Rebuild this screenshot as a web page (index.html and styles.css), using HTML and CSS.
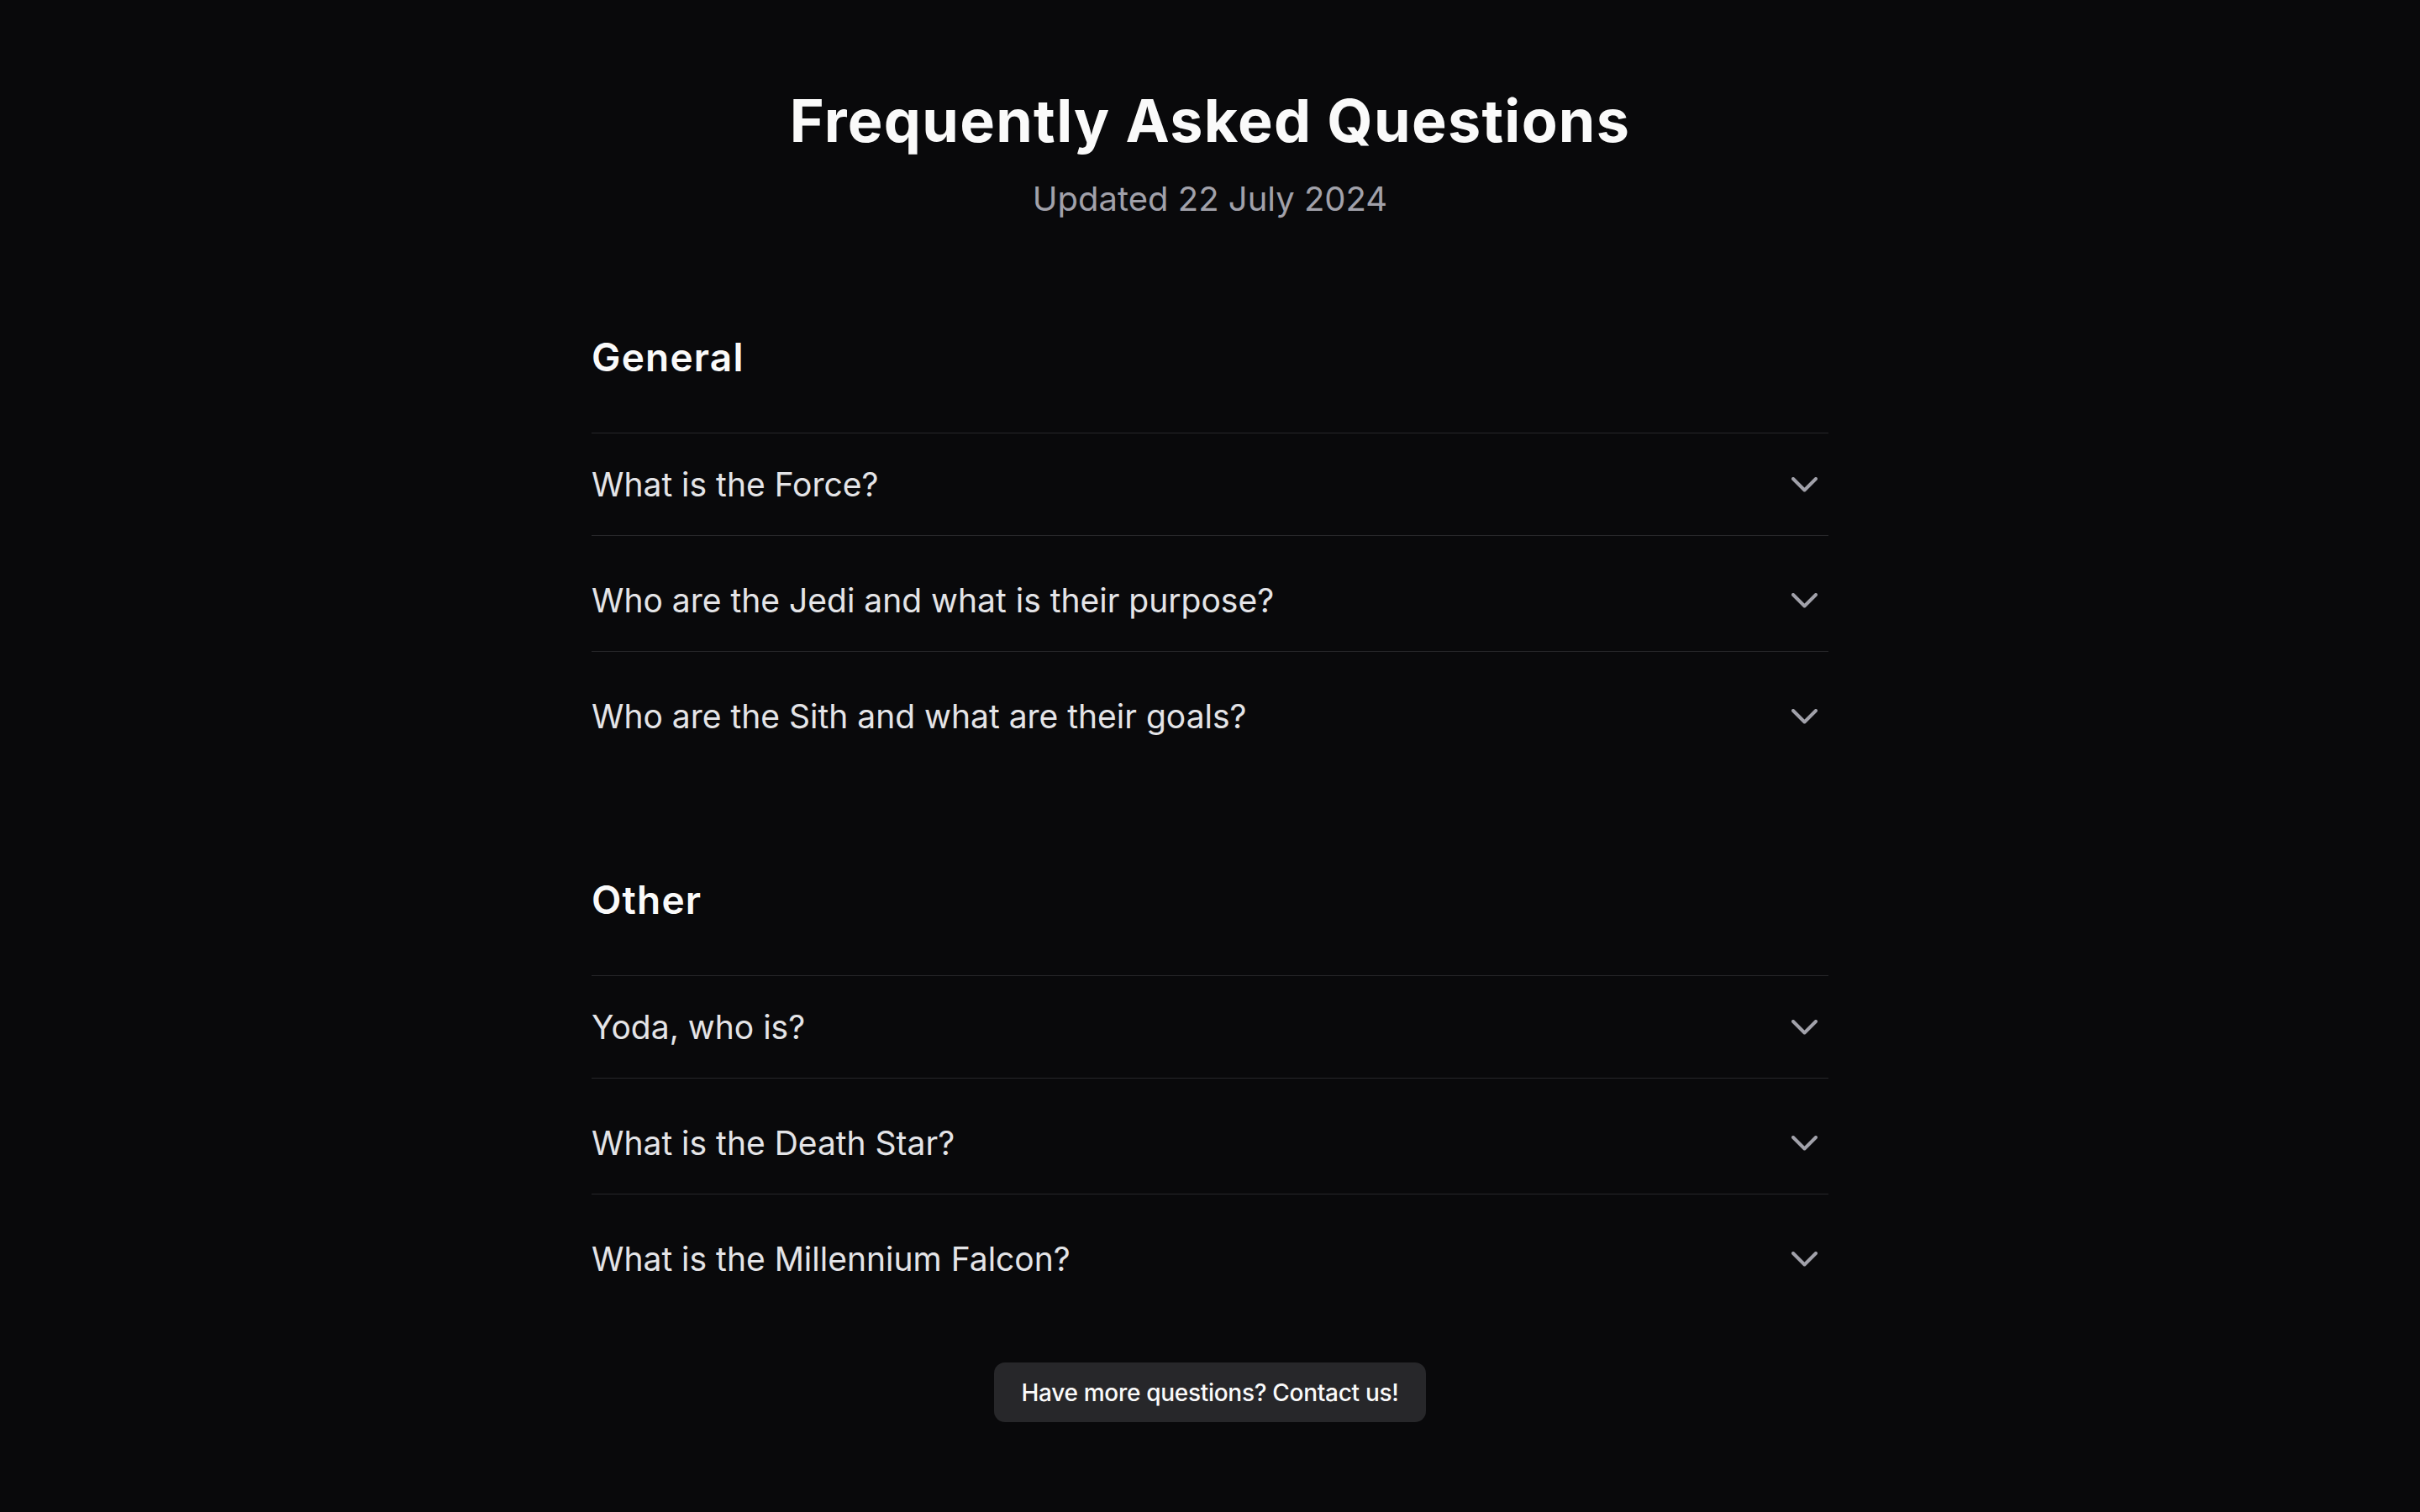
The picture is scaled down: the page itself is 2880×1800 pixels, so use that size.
FILE: index.html
```html
<!DOCTYPE html>
<html lang="en">
<head>
<meta charset="utf-8">
<title>Frequently Asked Questions</title>
<link rel="stylesheet" href="styles.css">
</head>
<body>
<main class="page">
  <header class="page-header">
    <h1 class="title">Frequently Asked Questions</h1>
    <p class="subtitle">Updated 22 July 2024</p>
  </header>

  <section class="faq-section">
    <h2 class="section-title">General</h2>
    <div class="faq-list">
      <div class="faq-item">
        <button class="faq-trigger"><span>What is the Force?</span>
          <svg class="chev" width="31" height="18" viewBox="0 0 31 18"><polyline points="2,2 15.5,15.5 29,2"/></svg>
        </button>
      </div>
      <div class="faq-item">
        <button class="faq-trigger"><span>Who are the Jedi and what is their purpose?</span>
          <svg class="chev" width="31" height="18" viewBox="0 0 31 18"><polyline points="2,2 15.5,15.5 29,2"/></svg>
        </button>
      </div>
      <div class="faq-item">
        <button class="faq-trigger"><span>Who are the Sith and what are their goals?</span>
          <svg class="chev" width="31" height="18" viewBox="0 0 31 18"><polyline points="2,2 15.5,15.5 29,2"/></svg>
        </button>
      </div>
    </div>
  </section>

  <section class="faq-section">
    <h2 class="section-title">Other</h2>
    <div class="faq-list">
      <div class="faq-item">
        <button class="faq-trigger"><span>Yoda, who is?</span>
          <svg class="chev" width="31" height="18" viewBox="0 0 31 18"><polyline points="2,2 15.5,15.5 29,2"/></svg>
        </button>
      </div>
      <div class="faq-item">
        <button class="faq-trigger"><span>What is the Death Star?</span>
          <svg class="chev" width="31" height="18" viewBox="0 0 31 18"><polyline points="2,2 15.5,15.5 29,2"/></svg>
        </button>
      </div>
      <div class="faq-item">
        <button class="faq-trigger"><span>What is the Millennium Falcon?</span>
          <svg class="chev" width="31" height="18" viewBox="0 0 31 18"><polyline points="2,2 15.5,15.5 29,2"/></svg>
        </button>
      </div>
    </div>
  </section>

  <div class="cta">
    <a class="cta-button" href="#">Have more questions? Contact us!</a>
  </div>
</main>
</body>
</html>
```

FILE: styles.css
```css
* { box-sizing: border-box; }

html, body {
  margin: 0;
  padding: 0;
  background: #09090b;
  color: #fafafa;
  font-family: Inter, "Noto Sans", "Liberation Sans", sans-serif;
}

body {
  min-height: 1800px;
}

.page {
  width: 1472px;
  margin: 0 auto;
  padding-top: 102px;
  display: flex;
  flex-direction: column;
}

.page-header {
  text-align: center;
  margin-bottom: 136px;
}

.title {
  margin: 0;
  font-size: 70px;
  line-height: 84px;
  font-weight: 700;
  color: #fafafa;
  letter-spacing: 1.3px;
}

.subtitle {
  margin: 27px 0 0;
  font-size: 40px;
  line-height: 48px;
  font-weight: 400;
  color: #a1a1aa;
}

.faq-section + .faq-section {
  margin-top: 130px;
}

.section-title {
  margin: 0 0 62px;
  font-size: 46px;
  line-height: 56px;
  font-weight: 600;
  color: #fafafa;
  letter-spacing: 1.2px;
}

.faq-item {
  border-top: 1px solid #27272a;
}

.faq-item + .faq-item {
  padding-top: 16px;
}

.faq-trigger {
  width: 100%;
  height: 121px;
  display: flex;
  align-items: center;
  justify-content: space-between;
  background: none;
  border: 0;
  padding: 0;
  margin: 0;
  font-family: inherit;
  font-size: 39px;
  line-height: 47px;
  font-weight: 400;
  color: #e4e4e7;
  text-align: left;
  cursor: pointer;
}

.chev {
  margin-right: 13px;
  fill: none;
  stroke: #a1a1aa;
  stroke-width: 4;
  stroke-linecap: round;
  stroke-linejoin: round;
}

.cta {
  display: flex;
  justify-content: center;
  margin-top: 63px;
}

.cta-button {
  display: inline-flex;
  align-items: center;
  height: 71px;
  padding: 0 33px;
  background: #27272a;
  border-radius: 13px;
  color: #fafafa;
  font-size: 28px;
  font-weight: 500;
  letter-spacing: -0.3px;
  text-decoration: none;
}
```
